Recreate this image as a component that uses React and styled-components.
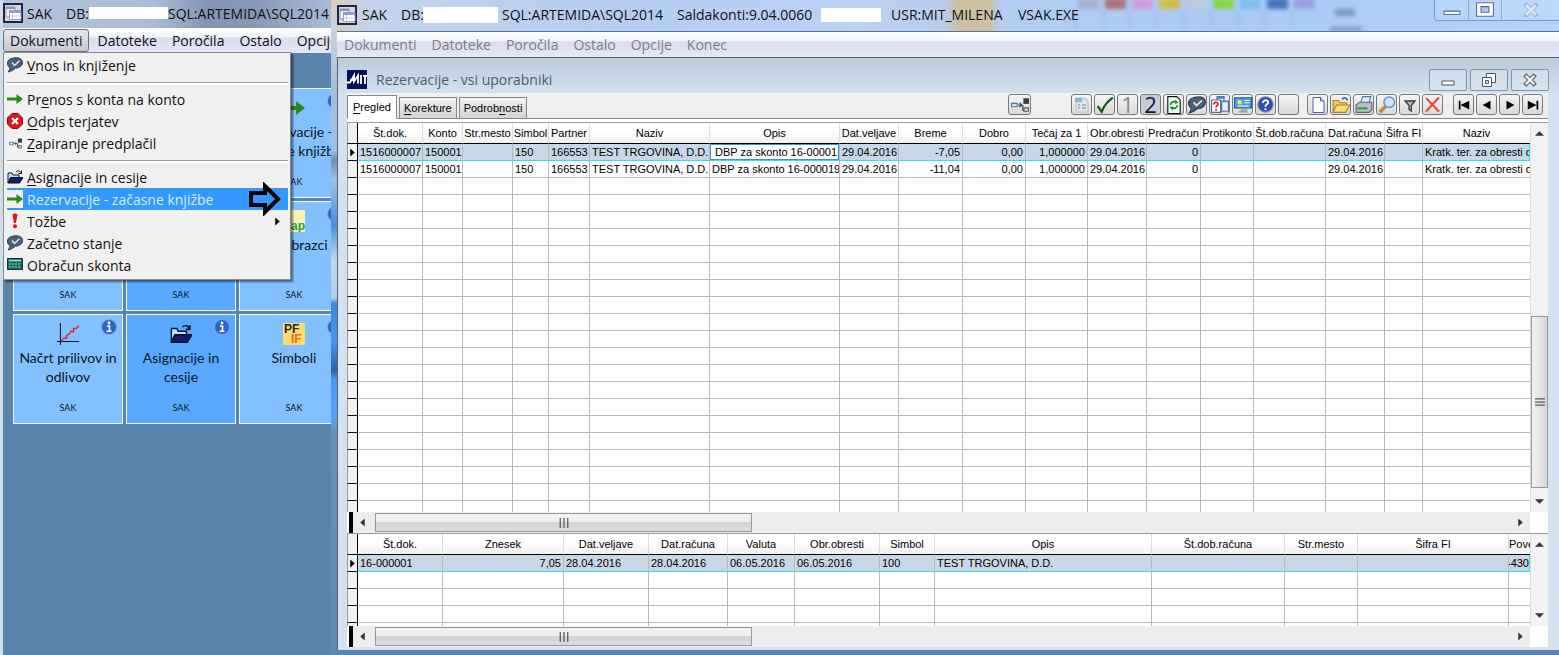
import React from 'react';
import styled, { createGlobalStyle } from 'styled-components';

const GlobalStyle = createGlobalStyle`
    * {
        box-sizing: border-box;
    }
    body {
        margin: 0;
        overflow: hidden;
        background: #5a84ab;
        color: #111;
        font-family: 'Open Sans', 'Noto Sans', sans-serif;
        font-size: 14px;
    }
    button {
        font: inherit;
        color: inherit;
        padding: 0;
        margin: 0;
    }
    u {
        text-underline-offset: 2px;
    }
`;

const Desktop = styled.div`
    display: flex;
    height: 100vh;
    overflow: hidden;
`;

/* ---------- launcher window ---------- */

const Launcher = styled.aside`
    position: relative;
    display: flex;
    flex-direction: column;
    flex: 0 0 331px;
    overflow: hidden;
    border-left: 3px solid #cfdcea;
    background: #5a84ab;
`;

const TitleBar = styled.header`
    position: relative;
    display: flex;
    align-items: center;
    flex: none;
    height: ${p => (p.$main ? 31 : 28)}px;
    padding-bottom: 2px;
    overflow: hidden;
    white-space: nowrap;
    background: ${p =>
        p.$main
            ? 'linear-gradient(90deg, #d8cfb8 0, #c3d3ea 30px, #b4cdf0 300px, #b9d1f4 520px, #b9cdea 608px, #cdbf9f 622px, #cdbf9f 652px, #b4cdf0 662px, #a9c9f6 900px, #b3d3fa)'
            : 'linear-gradient(90deg, #b4c4dc 0, #a9bbd6 150px, #8296b4 205px, #8698b4 250px, #a8bcd8)'};

    svg {
        flex: none;
    }
`;

const TitlePart = styled.span`
    flex: none;
    width: ${p => p.$w}px;
    z-index: 1;
`;

const Blank = styled.span`
    flex: none;
    width: ${p => p.$w}px;
    height: ${p => p.$h || 14}px;
    margin-right: ${p => p.$gap || 0}px;
    background: #fff;
    z-index: 1;
`;

const TitleIcon = styled.span`
    display: flex;
    flex: none;
    width: ${p => p.$w}px;
`;

const Glass = styled.svg`
    position: absolute;
    top: 0;
    right: 0;
`;

const MenuBar = styled.nav`
    display: flex;
    align-items: center;
    gap: 1px;
    flex: none;
    height: ${p => (p.$main ? 27 : 25)}px;
    overflow: hidden;
    background: linear-gradient(#fff 0, #f3f4fa 36%, #d8dcee 40%, #e3e6f5 90%);
    border-top: ${p => (p.$main ? '1px solid #5b7599' : '0')};
    border-bottom: ${p => (p.$main ? '1px solid #50606e' : '0')};
`;

const MenuButton = styled.button`
    flex: none;
    height: 23px;
    padding: 0 6px;
    line-height: 19px;
    border: 1px solid ${p => (p.$open ? '#6d7078' : 'transparent')};
    border-radius: 3px;
    background: ${p => (p.$open ? 'linear-gradient(#e4e6ee, #c6cad6)' : 'none')};
    color: ${p => (p.$dim ? '#7c7d85' : '#111')};
`;

const Popup = styled.ul`
    position: absolute;
    z-index: 3;
    top: 52px;
    left: 0;
    width: 288px;
    height: 228px;
    margin: 0;
    padding: 1px 2px 5px 3px;
    list-style: none;
    background: #f0f0f0;
    border: 1px solid #8d8d8d;
    box-shadow: 2px 2px 2px rgba(0, 0, 0, 0.5);
`;

const PopupItem = styled.li`
    height: 22px;
    background: ${p => (p.$active ? '#3399ff' : 'none')};
    color: ${p => (p.$active ? '#dcecff' : '#111')};

    button {
        display: flex;
        align-items: center;
        gap: 4px;
        width: 100%;
        height: 22px;
        border: 0;
        background: none;
    }
`;

const ItemIcon = styled.span`
    display: flex;
    align-items: center;
    justify-content: center;
    width: 16px;
    height: 18px;
    background: ${p => (p.$active ? '#f0f0f0' : 'none')};
`;

const ItemMark = styled.span`
    display: flex;
    margin-left: auto;
    padding-right: 6px;
`;

const PopupLine = styled.li`
    height: 12px;
    padding-top: 6px;

    &::before {
        content: '';
        display: block;
        height: 2px;
        border-top: 1px solid #a0a0a0;
        background: #fff;
    }
`;

const Tiles = styled.div`
    display: grid;
    grid-template-columns: repeat(3, 110px);
    grid-auto-rows: 110px;
    gap: 3px;
    padding: 35px 0 0 10px;
`;

const Tile = styled.button`
    position: relative;
    display: flex;
    flex-direction: column;
    align-items: center;
    border: 1px solid #eef6ff;
    background: ${p => (p.$dark ? '#58a9ff' : '#83c0ff')};
    font-family: Lato, 'Open Sans', sans-serif;
    font-size: 14px;
    line-height: 19px;
    color: #0b1520;

    .pic {
        height: 25px;
        margin-top: 8px;
    }
    .name {
        height: 54px;
    }
    .module {
        font-size: 9px;
        line-height: 12px;
    }
    .info {
        position: absolute;
        top: 4px;
        right: 5px;
        display: flex;
    }
`;

const Edge = styled.div`
    flex: 0 0 6px;
    background: linear-gradient(
        #d8cfb8 0,
        #c9d2df 30px,
        #a9bdd4 90px,
        #9fc0e8 150px,
        #7390b4 160px,
        #a3c0e2 180px,
        #4a8ee0 225px,
        #c3d6ea 260px,
        #b7cce4 298px,
        #3a84da 304px,
        #4a98f4 340px,
        #2a62a8 370px,
        #4a98f4 380px,
        #58a4f4 420px,
        #6a92b8 430px,
        #6289b0
    );
`;

/* ---------- main window ---------- */

const Main = styled.main`
    display: flex;
    flex-direction: column;
    flex: 1;
    min-width: 0;
    padding-bottom: 5px;
`;

const Child = styled.section`
    display: flex;
    flex-direction: column;
    flex: 1;
    min-height: 0;
    padding: 0 11px 3px 9px;
    border-left: 1px solid #56616e;
    background: linear-gradient(#bccbd9, #d3e2f0 36px, #d5e3f1);
`;

const ChildTitle = styled.div`
    display: flex;
    align-items: center;
    flex: none;
    gap: 9px;
    height: 35px;
    padding-top: 8px;
    color: #4d5c68;
`;

const WindowButtons = styled.div`
    display: flex;
    gap: 3px;
    margin-left: auto;
    margin-right: -1px;
`;

const WindowButton = styled.button`
    display: flex;
    align-items: center;
    justify-content: center;
    width: 38px;
    height: 22px;
    border: 1px solid #8496aa;
    border-radius: 2px;
    background: rgba(220, 232, 244, 0.5);
`;

const FrameButtons = styled.div`
    position: absolute;
    top: 0;
    right: 0;
    display: flex;
    height: 21px;
    border: 1px solid #7b97bd;
    border-width: 0 0 1px 1px;
    border-bottom-left-radius: 4px;
`;

const FrameButton = styled.button`
    display: flex;
    align-items: center;
    justify-content: center;
    width: ${p => p.$w}px;
    height: 20px;
    border: 0;
    border-right: 1px solid #8eabd0;
    background: rgba(255, 255, 255, 0.12);

    &:last-child {
        border-right: 0;
    }
`;

const Panel = styled.div`
    display: flex;
    flex-direction: column;
    flex: 1;
    min-height: 0;
    background: #fff;
`;

const ToolRow = styled.div`
    display: flex;
    align-items: flex-end;
    flex: none;
    height: 26px;
    background: #f0f0f0;
    border-bottom: 1px solid #868686;
`;

const Tabs = styled.div`
    display: flex;
    align-items: flex-end;
    gap: 2px;
    height: 26px;
    margin-bottom: -1px;
`;

const Tab = styled.button`
    height: ${p => (p.$on ? 24 : 22)}px;
    padding: 0 ${p => (p.$on ? 5 : 4)}px;
    font-family: 'Liberation Sans', sans-serif;
    font-size: 11px;
    color: #000;
    border: 1px solid #868686;
    border-bottom-color: ${p => (p.$on ? '#fff' : '#868686')};
    background: ${p => (p.$on ? '#fff' : 'linear-gradient(#f2f2f2, #d2d2d2)')};
`;

const Tools = styled.div`
    display: flex;
    align-self: flex-start;
    gap: 2px;
    margin-left: auto;
    padding: 1px 5px 0 0;
`;

const Tool = styled.button`
    display: flex;
    align-items: center;
    justify-content: center;
    width: ${p => (p.$wide ? 23 : 21)}px;
    height: 21px;
    margin-right: ${p => p.$gap || 0}px;
    border: 1px solid #77777c;
    border-radius: 3px;
    background: ${p => (p.$down ? '#c9ccd4' : 'linear-gradient(#f4f4f4, #d9d9d9)')};
`;

const Digit = styled.span`
    font-size: 22px;
    line-height: 19px;
    color: ${p => p.$color};
`;

const GridArea = styled.div`
    display: flex;
    flex: ${p => (p.$h ? `0 0 ${p.$h}px` : '1 1 0')};
    min-height: 0;
    overflow: hidden;
    border-top: 1px solid #9a9a9a;
    margin-top: ${p => (p.$h ? 0 : 3)}px;
`;

const GridClip = styled.div`
    flex: 1;
    min-width: 0;
    overflow: hidden;
`;

const Grid = styled.table`
    width: 100%;
    table-layout: fixed;
    border-collapse: separate;
    border-spacing: 0;
    font-family: 'Liberation Sans', sans-serif;
    font-size: 11px;
    line-height: 15px;
    color: #000;

    th {
        height: 21px;
        padding: 0;
        font-weight: normal;
        white-space: nowrap;
        overflow: hidden;
        background: linear-gradient(#fff 40%, #f0f0f1);
        border-right: 1px solid #dcdde0;
        border-bottom: 1px solid #000;
    }
    td {
        height: 17px;
        padding: 0 2px;
        white-space: nowrap;
        overflow: hidden;
        border-right: 1px solid #b9b9b9;
        border-bottom: 1px solid #b9b9b9;
    }
    td:last-child,
    th:last-child {
        border-right: 0;
    }
    td:last-child {
        padding-right: 0;
    }
    th:first-child,
    td:first-child {
        padding: 0;
        background: #f0f0f0;
        border-right: 1px solid #000;
        border-left: 1px solid #999;
    }
    td:first-child {
        border-bottom: 1px solid #111;
    }
    td:first-child svg {
        display: block;
        margin-left: auto;
    }
`;

const Row = styled.tr`
    && td:not(:first-child) {
        ${p => p.$selected && 'background: #c7d7e8; border-bottom-color: #35dfe6;'}
    }
    && td:last-child {
        ${p => p.$selected && 'border-right: 1px solid #35dfe6;'}
    }
`;

const CellText = styled.div`
    display: flex;
    justify-content: ${p => (p.$right ? 'flex-end' : 'flex-start')};
`;

const CellInput = styled.input`
    flex: 1;
    min-width: 0;
    height: 16px;
    margin: 0 -2px;
    padding: 0 0 0 4px;
    border: 1px solid #3d8fe0;
    outline: 0;
    background: #fff;
    font: inherit;
    color: #000;
`;

const VBar = styled.div`
    display: flex;
    flex-direction: column;
    align-items: center;
    justify-content: space-between;
    flex: 0 0 18px;
    padding: 6px 0;
    background: #f2f2f2;
    border-left: 1px solid #ddd;
`;

const VThumb = styled.div`
    display: flex;
    align-items: center;
    justify-content: center;
    width: 17px;
    height: 172px;
    margin-top: 168px;
    border: 1px solid #979797;
    background: linear-gradient(90deg, #f4f4f4, #d5d5d8);
`;

const HRow = styled.div`
    display: flex;
    flex: none;
    height: 21px;
    padding-right: 18px;
`;

const HBar = styled.div`
    display: flex;
    align-items: center;
    flex: 1;
    gap: 8px;
    padding: 0 5px;
    background: #ededed;
    border-left: 4px solid #000;
    margin-left: 2px;
`;

const HThumb = styled.div`
    display: flex;
    align-items: center;
    justify-content: center;
    width: 377px;
    height: 19px;
    margin-right: auto;
    border: 1px solid #979797;
    background: linear-gradient(#f0f0f0 45%, #d3d3d6 50%, #dcdcdc);
`;

/* ---------- drawings ---------- */

const Svg = ({ s = 16, children }) => (
    <svg width={s} height={s} viewBox="0 0 16 16" aria-hidden="true">
        {children}
    </svg>
);

const AppIcon = () => (
    <svg width="20" height="20" viewBox="0 0 20 20" aria-hidden="true">
        <rect x="1" y="1" width="18" height="18" fill="#d9d6d6" stroke="#1d2452" strokeWidth="2" />
        <path d="M3 4h9v10H3z" fill="#f4f1e8" stroke="#9a9aa8" />
        <path d="M3 4h9v2H3z" fill="#8a93bc" />
        <path d="M6.500 7.500H18v9H6.500z" fill="#fff" stroke="#9aa0c0" />
        <path d="M6 7h12v3H6z" fill="#8e9cd0" />
        <path d="M9.500 10v6M7 13h11" stroke="#cfcad8" />
    </svg>
);

const MitLogo = () => (
    <svg width="20" height="19" viewBox="0 0 20 19" aria-hidden="true">
        <rect width="20" height="19" fill="#04105c" />
        <path d="M0 12.500h3L7 5.500v6l4-6v8M3 10h4" fill="none" stroke="#fff" strokeWidth="1.800" />
        <path d="M14 5v9M16 5.800h4M18 6v8" stroke="#fff" strokeWidth="1.800" />
    </svg>
);

const Bubble = ({ s }) => (
    <Svg s={s}>
        <path
            d="M9 .8c4 0 6.500 1.700 6.500 4.800 0 3.200-3 5.500-7 5.500C6.800 12.600 4 14.500 1.200 15c1-1.300 1.700-2.800 1.600-4.600C1.200 9.500.4 8.200.4 6.200.4 2.700 4.500.8 9 .8z"
            fill="#4d6078"
            stroke="#2e3e55"
        />
        <path d="M5 5.500 7.500 8.500 12.500 3.800" fill="none" stroke="#dce6f0" strokeWidth="1.500" />
    </Svg>
);

const GreenArrow = ({ s }) => (
    <Svg s={s}>
        <path d="M0 6.500h9.500V3L16 8l-6.500 5V9.500H0z" fill="#2c8a0c" />
    </Svg>
);

const RedCross = () => (
    <Svg>
        <path d="M5 .5h6L15.500 5v6L11 15.500H5L.5 11V5z" fill="#dd1119" stroke="#93090f" />
        <path d="M5 5l6 6M11 5l-6 6" stroke="#fff" strokeWidth="2.200" />
    </Svg>
);

const Nodes = ({ s }) => (
    <Svg s={s}>
        <path d="M.5 6.500h5v3h-5z" fill="#cfe6ee" stroke="#4c7d90" />
        <path d="M6 8h4M7.500 6l2 2-2 2M12.500 12.500h-2V8" fill="none" stroke="#333a66" />
        <path d="M11 2h5v5h-5z" fill="#3c3c3c" />
        <path d="M11.500 10.500h4v3h-4z" fill="#dbe4ee" stroke="#556" />
    </Svg>
);

const Folder = ({ s = 16 }) => (
    <Svg s={s}>
        <path d="M1 14V4h4l1 2h6v2" fill="#bfe0f2" stroke="#0a1238" />
        <path d="M3.500 8.500H16L12.500 14H1z" fill="#0f1c66" stroke="#060b30" />
        <path d="M9 3c2-2 4-1 5 1M14.500 1.500v3h-3" fill="none" stroke="#111" />
    </Svg>
);

const Exclaim = () => (
    <Svg>
        <path d="M5.500 1.500C6.500 0 9.500 0 10.500 1.500L9 10H7z" fill="#dd1420" />
        <circle cx="8" cy="13.300" r="2" fill="#dd1420" />
    </Svg>
);

const Calculator = () => (
    <Svg>
        <path d="M.5 1.500h15v11H.5z" fill="#1b6b6a" stroke="#0c2f3b" />
        <path d="M2 3.500h12" stroke="#9be0c8" strokeWidth="1.500" />
        <path d="M2 7h12M2 10h12" stroke="#62b7a2" strokeWidth="1.500" strokeDasharray="2 1" />
    </Svg>
);

const BlockArrow = () => (
    <svg width="34" height="34" viewBox="0 0 34 34" aria-hidden="true">
        <path d="M3 11h14V4l13 13-13 13v-7H3z" fill="#3399ff" stroke="#000" strokeWidth="4" />
    </svg>
);

const Info = () => (
    <Svg>
        <circle cx="8" cy="8" r="7.500" fill="#2f62c8" stroke="#7fa5e4" />
        <path d="M6 7h2.500v5M5.500 12.300h5" fill="none" stroke="#fff" strokeWidth="1.600" />
        <circle cx="8" cy="4" r="1.400" fill="#fff" />
    </Svg>
);

const Chart = () => (
    <Svg s={22}>
        <path d="M2.500 0v16M0 13.500h16" stroke="#12122a" strokeWidth=".8" />
        <path d="M3 13l2-2h2V9l2-1 1-2 2 .5V4h2l2-2" fill="none" stroke="#dd1a2a" />
    </Svg>
);

const Badge = ({ a, b, ca, cb, bg = '#fbdc6c' }) => (
    <svg width="22" height="22" viewBox="0 0 22 22" aria-hidden="true">
        <rect width="22" height="22" fill={bg} />
        <text x="1" y="10" fontFamily="Liberation Sans" fontWeight="bold" fontSize="12" fill={ca}>
            {a}
        </text>
        <text x="8" y="20" fontFamily="Liberation Sans" fontWeight="bold" fontSize="12" fill={cb}>
            {b}
        </text>
    </svg>
);

const Tri = ({ dir, s = 9, color = '#333' }) => {
    const shapes = {
        left: 'M12 1v14L4 8z',
        right: 'M4 1v14l8-7z',
        up: 'M0 12h16L8 4z',
        down: 'M0 4h16l-8 8z',
    };
    return (
        <Svg s={s}>
            <path d={shapes[dir]} fill={color} />
        </Svg>
    );
};

const Grip = ({ vertical }) => (
    <Svg s={10}>
        <path
            d={vertical ? 'M0 3h16M0 8h16M0 13h16' : 'M2 0v16M8 0v16M14 0v16'}
            stroke="#55575c"
            strokeWidth="2"
        />
    </Svg>
);

const TOOL_ICONS = {
    form: (
        <Svg>
            <path d="M2 1h9l3 3v11H2z" fill="#dfe5ec" stroke="#b4bcc8" />
            <path d="M1 1h7v4H1z" fill="#83b7dc" />
            <path d="M4 8h2M8 8h4M4 11h2M8 11h4" stroke="#98a2ae" strokeWidth="1.500" />
        </Svg>
    ),
    check: (
        <Svg s={18}>
            <path d="M1.500 9 5 14C7 9 10 5 15 1.500" fill="none" stroke="#125c12" strokeWidth="2" />
        </Svg>
    ),
    one: <Digit $color="#8a8a8a">1</Digit>,
    two: <Digit $color="#0e1650">2</Digit>,
    refresh: (
        <Svg s={18}>
            <path d="M2.500.5h8l3 3v12h-11z" fill="#f4fff4" stroke="#111" />
            <path d="M5 8c0-3 3-3.500 4.500-2.500M11 8c0 3-3 3.500-4.500 2.500" fill="none" stroke="#138a2c" strokeWidth="1.500" />
            <path d="M9 3l3 3-3 1zM7 13l-3-3 3-1z" fill="#138a2c" />
        </Svg>
    ),
    bubble: <Bubble s={18} />,
    helpWindows: (
        <Svg s={18}>
            <path d="M5.500.500h6v9h-6z" fill="#fff" stroke="#4a6f9c" />
            <path d="M5 1.500h7" stroke="#4a80b4" strokeWidth="2" />
            <path d="M9.500 4.500h6v9h-6z" fill="#e6f1fb" stroke="#4a6f9c" />
            <path d="M9 5h7" stroke="#4a80b4" />
            <path d="M.5 3.500h8v11h-8z" fill="#fff" stroke="#4a6f9c" />
            <path d="M2.500 7.500c0-2.500 4-2.500 3.700 0-.2 1.200-1.700 1.200-1.700 2.700M4.500 11.500v1.500" fill="none" stroke="#d8202a" strokeWidth="1.500" />
        </Svg>
    ),
    monitor: (
        <Svg s={18}>
            <path d="M.5 1.500h15v9H.5z" fill="#4aa0e0" stroke="#245e9c" />
            <circle cx="5" cy="5.500" r="2" fill="#ffe37a" />
            <path d="M9 4h5M9 6h5M3 9h10" stroke="#e9f5ff" />
            <path d="M7 11.500h4v2H7zM4 14h8" stroke="#9aa4ae" strokeWidth="1.500" fill="none" />
        </Svg>
    ),
    help: (
        <Svg s={17}>
            <circle cx="8" cy="8" r="7.300" fill="#2c50ae" stroke="#8a93a8" />
            <path d="M5.500 6.500c0-3.500 5.300-3.200 5-.3C10.300 8 8 7.800 8 10M8 11.500v2" fill="none" stroke="#fff" strokeWidth="1.800" />
        </Svg>
    ),
    page: (
        <Svg>
            <path d="M3 .5h7.500L14 4v11.500H3z" fill="#fff" stroke="#44629c" />
            <path d="M10.500.5V4H14" fill="#c9dbf0" stroke="#44629c" />
        </Svg>
    ),
    open: (
        <Svg s={18}>
            <path d="M1 14V4h5l1 2h6v3" fill="#f6cf5a" stroke="#a97f1f" />
            <path d="M4 8h12l-4 6.500H1z" fill="#fbdd82" stroke="#a97f1f" />
            <path d="M9 3c2-2.500 4-1 5 1" fill="none" stroke="#2f66b0" strokeWidth="1.500" />
        </Svg>
    ),
    print: (
        <Svg s={18}>
            <path d="M5 6 7 .5h7L12.500 6" fill="#dff0ff" stroke="#4b74b0" />
            <path d="M1 8l3-2.500h11V12l-2.500 2.500H1z" fill="#b9bfc8" stroke="#5b626e" />
            <path d="M2 11h9" stroke="#30a030" strokeWidth="2" />
        </Svg>
    ),
    search: (
        <Svg s={18}>
            <path d="M6.500 9.500 1.500 14.500" stroke="#c98246" strokeWidth="3" />
            <circle cx="10" cy="5.500" r="4.700" fill="#cfe8fb" stroke="#5f8fc4" strokeWidth="1.300" />
        </Svg>
    ),
    filter: (
        <Svg>
            <path d="M3 4h10L9.300 8.500V14L7 12.500v-4z" fill="#b9b9b9" stroke="#3d3d3d" strokeWidth="1.300" />
        </Svg>
    ),
    remove: (
        <Svg s={17}>
            <path d="M2 2l12 12.500M14 1.500 2 14.500" stroke="#ec4530" strokeWidth="2" />
        </Svg>
    ),
    first: (
        <Svg s={14}>
            <path d="M2 3h2v10H2zM14 3v10L4 8z" fill="#000" />
        </Svg>
    ),
    prev: (
        <Svg s={14}>
            <path d="M12 3v10L3 8z" fill="#000" />
        </Svg>
    ),
    next: (
        <Svg s={14}>
            <path d="M4 3v10l9-5z" fill="#000" />
        </Svg>
    ),
    last: (
        <Svg s={14}>
            <path d="M12 3h2v10h-2zM2 3v10l10-5z" fill="#000" />
        </Svg>
    ),
};

/* ---------- data ---------- */

const MENU = ['Dokumenti', 'Datoteke', 'Poročila', 'Ostalo', 'Opcije', 'Konec'];

const POPUP = [
    { key: 'V', rest: 'nos in knjiženje', icon: <Bubble /> },
    { line: true },
    { pre: 'Pr', key: 'e', rest: 'nos s konta na konto', icon: <GreenArrow /> },
    { key: 'O', rest: 'dpis terjatev', icon: <RedCross /> },
    { key: 'Z', rest: 'apiranje predplačil', icon: <Nodes s={13} /> },
    { line: true },
    { key: 'A', rest: 'signacije in cesije', icon: <Folder /> },
    { rest: 'Rezervacije - začasne knjižbe', icon: <GreenArrow />, active: true, mark: <BlockArrow /> },
    { rest: 'Tožbe', icon: <Exclaim />, mark: <Tri dir="right" color="#000" /> },
    { rest: 'Začetno stanje', icon: <Bubble /> },
    { rest: 'Obračun skonta', icon: <Calculator /> },
];

const TILES = [
    {},
    {},
    { name: 'Rezervacije - začasne knjižbe', icon: <GreenArrow s={22} />, module: 'SAK' },
    { module: 'SAK' },
    { module: 'SAK' },
    { name: 'PP Obrazci', icon: <Badge b="ap" cb="#27a046" bg="#fbf3b4" />, module: 'SAK' },
    { name: 'Načrt prilivov in odlivov', icon: <Chart />, module: 'SAK' },
    { name: 'Asignacije in cesije', icon: <Folder s={22} />, module: 'SAK' },
    { name: 'Simboli', icon: <Badge a="PF" b="IF" ca="#2c2a1c" cb="#f06a1c" />, module: 'SAK' },
];

const TOOLS = [
    { id: 'form' },
    { id: 'check' },
    { id: 'one' },
    { id: 'two', down: true },
    { id: 'refresh' },
    { id: 'bubble' },
    { id: 'helpWindows' },
    { id: 'monitor' },
    { id: 'help' },
    { id: 'empty', gap: 6 },
    { id: 'page' },
    { id: 'open' },
    { id: 'print' },
    { id: 'search' },
    { id: 'filter' },
    { id: 'remove', gap: 8 },
    { id: 'first' },
    { id: 'prev' },
    { id: 'next' },
    { id: 'last' },
];

const DOC_COLUMNS = [
    ['Št.dok.', 65],
    ['Konto', 40],
    ['Str.mesto', 50],
    ['Simbol', 36],
    ['Partner', 41],
    ['Naziv', 120],
    ['Opis', 130],
    ['Dat.veljave', 59],
    ['Breme', 64, true],
    ['Dobro', 63, true],
    ['Tečaj za 1', 62, true],
    ['Obr.obresti', 59],
    ['Predračun', 54, true],
    ['Protikonto', 53],
    ['Št.dob.računa', 72],
    ['Dat.računa', 59],
    ['Šifra FI', 38],
    ['Naziv', null],
];

const docRow = (opis, breme) => [
    '1516000007', '150001', '', '150', '166553', 'TEST TRGOVINA, D.D.', opis, '29.04.2016', breme,
    '0,00', '1,000000', '29.04.2016', '0', '', '', '29.04.2016', '', 'Kratk. ter. za obresti do',
];

const DOC_ROWS = [docRow('DBP za skonto 16-00001', '-7,05'), docRow('DBP za skonto 16-000019', '-11,04')];

const ITEM_COLUMNS = [
    ['Št.dok.', 85],
    ['Znesek', 121, true],
    ['Dat.veljave', 85],
    ['Dat.računa', 79],
    ['Valuta', 67],
    ['Obr.obresti', 85],
    ['Simbol', 55],
    ['Opis', 217],
    ['Št.dob.računa', 133],
    ['Str.mesto', 73],
    ['Šifra FI', 151],
    ['Pove', null, true],
];

const ITEM_ROWS = [
    ['16-000001', '7,05', '28.04.2016', '28.04.2016', '06.05.2016', '06.05.2016', '100', 'TEST TRGOVINA, D.D.', '', '', '', '-430'],
];

const DataGrid = ({ columns, rows, total, editCol }) => {
    const filled = [...rows, ...Array(total - rows.length).fill([])];
    return (
        <Grid>
            <colgroup>
                <col width="11" />
                {columns.map(([name, width], i) => (
                    <col key={name + i} width={width || undefined} />
                ))}
            </colgroup>
            <thead>
                <tr>
                    <th />
                    {columns.map(([name], i) => (
                        <th key={name + i}>{name}</th>
                    ))}
                </tr>
            </thead>
            <tbody>
                {filled.map((row, r) => (
                    <Row key={r} $selected={r === 0}>
                        <td>{r === 0 && <Tri dir="right" color="#000" />}</td>
                        {columns.map(([name, , right], c) => (
                            <td key={name + c}>
                                <CellText $right={right}>
                                    {r === 0 && c === editCol ? (
                                        <CellInput aria-label={name} defaultValue={row[c]} />
                                    ) : (
                                        row[c]
                                    )}
                                </CellText>
                            </td>
                        ))}
                    </Row>
                ))}
            </tbody>
        </Grid>
    );
};

const HScroll = () => (
    <HRow>
        <HBar>
            <Tri dir="left" />
            <HThumb>
                <Grip />
            </HThumb>
            <Tri dir="right" />
        </HBar>
    </HRow>
);

const LauncherWindow = () => (
    <Launcher>
        <TitleBar>
            <TitleIcon $w={24}>
                <AppIcon />
            </TitleIcon>
            <TitlePart $w={39}>SAK</TitlePart>
            <TitlePart $w={23}>DB:</TitlePart>
            <Blank $w={79} $h={12} />
            <TitlePart $w={164}>SQL:ARTEMIDA\SQL2014</TitlePart>
        </TitleBar>
        <MenuBar>
            {MENU.slice(0, 5).map((name, i) => (
                <MenuButton key={name} $open={i === 0}>
                    {name}
                </MenuButton>
            ))}
        </MenuBar>
        <Popup>
            {POPUP.map((item, i) =>
                item.line ? (
                    <PopupLine key={i} />
                ) : (
                    <PopupItem key={i} $active={item.active}>
                        <button>
                            <ItemIcon $active={item.active}>{item.icon}</ItemIcon>
                            <span>
                                {item.pre}
                                {item.key && <u>{item.key}</u>}
                                {item.rest}
                            </span>
                            {item.mark && <ItemMark>{item.mark}</ItemMark>}
                        </button>
                    </PopupItem>
                )
            )}
        </Popup>
        <Tiles>
            {TILES.map((tile, i) => (
                <Tile key={i} $dark={i % 3 === 1}>
                    <span className="pic">{tile.icon}</span>
                    <span className="name">{tile.name}</span>
                    <span className="module">{tile.module}</span>
                    <span className="info">
                        <Info />
                    </span>
                </Tile>
            ))}
        </Tiles>
    </Launcher>
);

const RIBBON = ['#a3b4d4', '#a9757a', '#cf9fdc', '#d3bd4a', '#bccbd8', '#86d845', '#7fc0f2', '#4676b8', '#9a9fe4'];

const App = () => (
    <>
        <GlobalStyle />
        <Desktop>
            <LauncherWindow />
            <Edge />
            <Main>
                <TitleBar $main>
                    <Glass width="499" height="31" viewBox="0 0 499 31" aria-hidden="true">
                        <defs>
                            <filter id="soft">
                                <feGaussianBlur stdDeviation="2" />
                            </filter>
                        </defs>
                        <g filter="url(#soft)">
                            {RIBBON.map((color, i) => (
                                <g key={color}>
                                    <rect x={18 + i * 27} y="-2" width="21" height="11" fill={color} />
                                    <path d={`M${16 + i * 27} 10v20`} stroke="#9dbbe6" strokeWidth="2" />
                                </g>
                            ))}
                            <rect x="275" y="9" width="20" height="7" fill="#7895bd" />
                            <rect x="270" y="27" width="32" height="4" fill="#7895bd" />
                        </g>
                    </Glass>
                    <TitleIcon $w={25}>
                        <AppIcon />
                    </TitleIcon>
                    <TitlePart $w={39}>SAK</TitlePart>
                    <TitlePart $w={22}>DB:</TitlePart>
                    <Blank $w={75} $h={16} $gap={4} />
                    <TitlePart $w={175}>SQL:ARTEMIDA\SQL2014</TitlePart>
                    <TitlePart $w={144}>Saldakonti:9.04.0060</TitlePart>
                    <Blank $w={60} $gap={10} />
                    <TitlePart $w={127}>USR:MIT_MILENA</TitlePart>
                    <TitlePart $w={80}>VSAK.EXE</TitlePart>
                    <FrameButtons>
                        <FrameButton $w={34} aria-label="Minimize">
                            <Svg s={18}>
                                <path d="M1 9h14v3H1z" fill="#fff" stroke="#5a6f8c" />
                            </Svg>
                        </FrameButton>
                        <FrameButton $w={33} aria-label="Maximize">
                            <Svg s={18}>
                                <path d="M.5 1.500h15v12H.5z" fill="#fff" stroke="#5a6f8c" />
                                <path d="M4.500 5h7v5h-7z" fill="#a9c9f6" stroke="#5a6f8c" />
                            </Svg>
                        </FrameButton>
                        <FrameButton $w={57} aria-label="Close">
                            <Svg>
                                <path d="M2 2l12 12M14 2 2 14" stroke="#8fa9cc" strokeWidth="4" />
                                <path d="M3 3l10 10M13 3 3 13" stroke="#dfe9f8" strokeWidth="2.500" />
                            </Svg>
                        </FrameButton>
                    </FrameButtons>
                </TitleBar>
                <MenuBar $main>
                    {MENU.map(name => (
                        <MenuButton key={name} $dim>
                            {name}
                        </MenuButton>
                    ))}
                </MenuBar>
                <Child>
                    <ChildTitle>
                        <MitLogo />
                        <span>Rezervacije - vsi uporabniki</span>
                        <WindowButtons>
                            <WindowButton aria-label="Minimize">
                                <Svg>
                                    <path d="M2 9h12v4H2z" fill="#fff" stroke="#4c5661" />
                                </Svg>
                            </WindowButton>
                            <WindowButton aria-label="Restore">
                                <Svg>
                                    <path d="M5.500 1.500h9v9h-9z" fill="#fff" stroke="#4c5661" />
                                    <path d="M1.500 5.500h9v9h-9z" fill="#fff" stroke="#4c5661" />
                                    <path d="M4.500 8.500h3v3h-3z" fill="#d3e2f0" stroke="#4c5661" />
                                </Svg>
                            </WindowButton>
                            <WindowButton aria-label="Close">
                                <Svg s={14}>
                                    <path d="M2 2l12 12M14 2 2 14" stroke="#4c5661" strokeWidth="5" />
                                    <path d="M3 3l10 10M13 3 3 13" stroke="#fff" strokeWidth="2.500" />
                                </Svg>
                            </WindowButton>
                        </WindowButtons>
                    </ChildTitle>
                    <Panel>
                        <ToolRow>
                            <Tabs>
                                <Tab $on>
                                    <u>P</u>regled
                                </Tab>
                                <Tab>
                                    <u>K</u>orekture
                                </Tab>
                                <Tab>
                                    Podrob<u>n</u>osti
                                </Tab>
                            </Tabs>
                            <Tools>
                                <Tool $wide $gap={38} aria-label="nodes">
                                    <Nodes s={18} />
                                </Tool>
                                {TOOLS.map(({ id, gap, down }) => (
                                    <Tool key={id} $gap={gap} $down={down} aria-label={id}>
                                        {TOOL_ICONS[id]}
                                    </Tool>
                                ))}
                            </Tools>
                        </ToolRow>
                        <GridArea>
                            <GridClip>
                                <DataGrid columns={DOC_COLUMNS} rows={DOC_ROWS} total={60} editCol={6} />
                            </GridClip>
                            <VBar>
                                <Tri dir="up" />
                                <VThumb>
                                    <Grip vertical />
                                </VThumb>
                                <Tri dir="down" />
                            </VBar>
                        </GridArea>
                        <HScroll />
                        <GridArea $h={93}>
                            <GridClip>
                                <DataGrid columns={ITEM_COLUMNS} rows={ITEM_ROWS} total={6} />
                            </GridClip>
                            <VBar>
                                <Tri dir="up" />
                                <Tri dir="down" />
                            </VBar>
                        </GridArea>
                        <HScroll />
                    </Panel>
                </Child>
            </Main>
        </Desktop>
    </>
);

export default App;
